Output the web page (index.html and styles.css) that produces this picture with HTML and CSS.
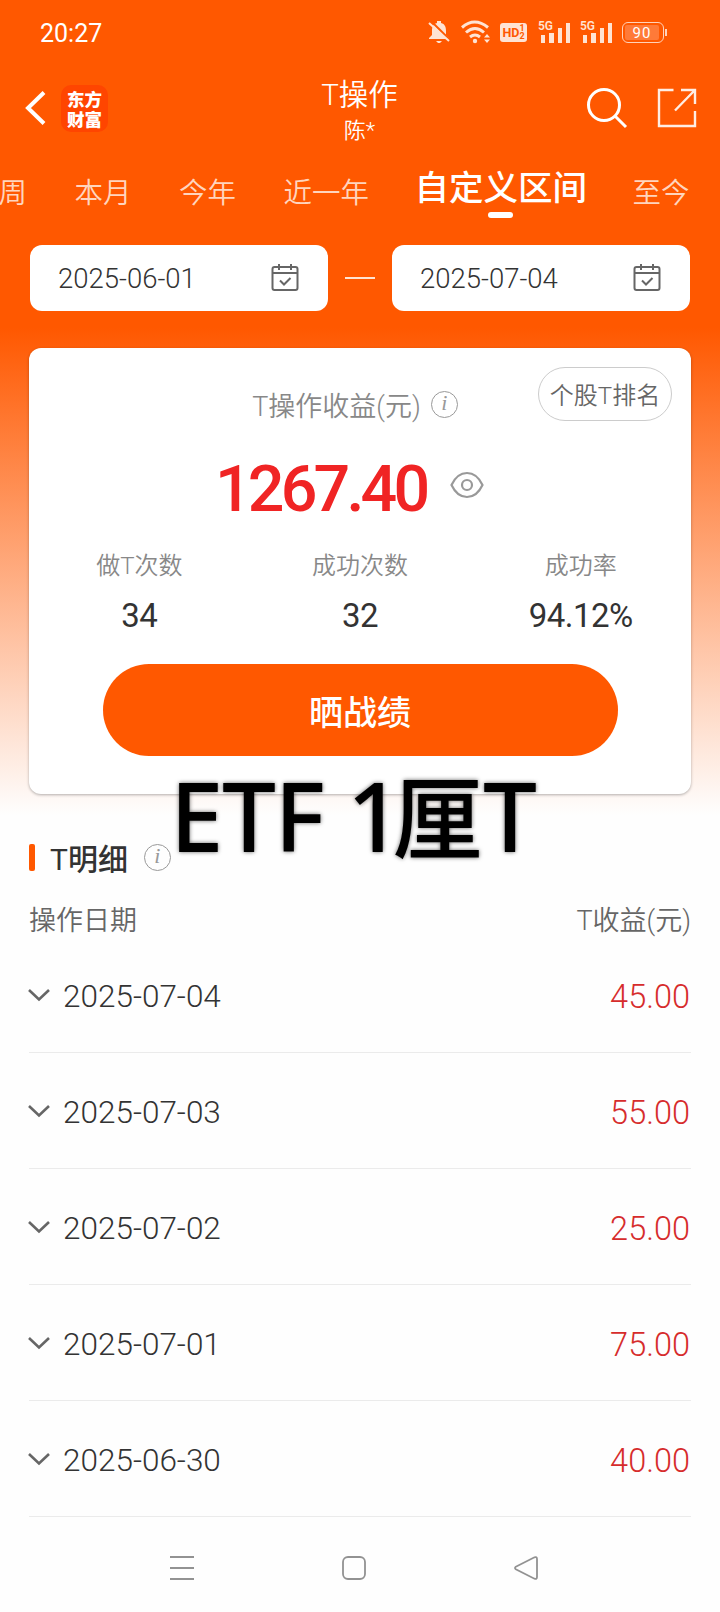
FILE: index.html
```
<!DOCTYPE html>
<html lang="zh-CN">
<head>
    <meta charset="UTF-8">
    <meta name="viewport" content="width=device-width, initial-scale=1.0">
    <title>T操作</title>
    <link rel="stylesheet" href="styles.css">
</head>
<body>
    <div class="page">
        <!-- 状态栏 -->
        <div class="status">
            <span class="time">20:27</span>
            <div class="status-icons">
                <svg class="bell" width="22" height="24" viewBox="0 0 22 24">
                    <path fill="#ffe3d3" d="M9 3V1h4v2c4 1 5 4 5 8v4l3 3v1H1v-1l3-3v-4c0-4 1-7 5-8zM8 21h6l-2 2h-2z"/>
                    <path stroke="#ff5800" stroke-width="2" d="M3 1l19 19"/>
                    <path stroke="#ffe3d3" stroke-width="2" d="M1 3l20 18"/>
                </svg>
                <svg class="wifi" width="30" height="24" viewBox="0 0 30 24">
                    <g fill="none" stroke="#ffe3d3" stroke-width="3">
                        <path d="M1 7.500q12.500-11 26 0M5 12.500q9-8 18 0M9 17q5-4 10 0"/>
                    </g>
                    <circle cx="14" cy="21" r="2.2" fill="#ffe3d3"/>
                    <path fill="#ffe3d3" d="M23 17.500l3-3.500 3 3.500zM23 19.500l3 3.500 3-3.500z"/>
                </svg>
                <span class="hd">HD<small>1<br>2</small></span>
                <span class="signal"><b>5G</b><i></i><i></i><i></i><i></i></span>
                <span class="signal"><b>5G</b><i></i><i></i><i></i><i></i></span>
                <span class="battery"><span>90</span></span>
            </div>
        </div>

        <!-- 标题栏 -->
        <header class="header">
            <div class="header-left">
                <svg width="22" height="36" viewBox="0 0 22 36">
                    <path d="M19 2.500L3 18l16 15.500" fill="none" stroke="#fff" stroke-width="4"/>
                </svg>
                <div class="logo">东方<br>财富</div>
            </div>
            <div class="title">
                <h1>T操作</h1>
                <p>陈*</p>
            </div>
            <div class="header-right">
                <svg width="42" height="42" viewBox="0 0 42 42" fill="none" stroke="#fff" stroke-width="3">
                    <circle cx="18" cy="18" r="15.500"/>
                    <path d="M29 29l11 11"/>
                </svg>
                <svg width="40" height="40" viewBox="0 0 40 40" fill="none" stroke="#ffede3" stroke-width="2.400">
                    <path d="M16.500 2H2v36h36V23M24 2h14v14M37.500 2.500L18 22.500"/>
                </svg>
            </div>
        </header>

        <!-- 时间范围 -->
        <nav class="tabs">
            <span>本周</span>
            <span>本月</span>
            <span>今年</span>
            <span>近一年</span>
            <span class="active">自定义区间</span>
            <span>至今</span>
        </nav>

        <div class="dates">
            <div class="date-box">
                <span>2025-06-01</span>
                <svg width="28" height="28" viewBox="0 0 28 28" fill="none" stroke="#666" stroke-width="2">
                    <rect x="1.500" y="3" width="25" height="23" rx="2"/>
                    <path d="M1.500 9h25M8 0v6M20 0v6M9 16.500l4 4 6.500-6.500"/>
                </svg>
            </div>
            <i class="dash"></i>
            <div class="date-box">
                <span>2025-07-04</span>
                <svg width="28" height="28" viewBox="0 0 28 28" fill="none" stroke="#666" stroke-width="2">
                    <rect x="1.500" y="3" width="25" height="23" rx="2"/>
                    <path d="M1.500 9h25M8 0v6M20 0v6M9 16.500l4 4 6.500-6.500"/>
                </svg>
            </div>
        </div>

        <!-- 收益卡片 -->
        <section class="card">
            <a class="rank">个股T排名</a>
            <div class="label">T操作收益(元)<span class="tip">i</span></div>
            <div class="amount">
                <span>1267.40</span>
                <svg width="34" height="28" viewBox="0 0 34 28" fill="none" stroke="#999" stroke-width="2.200">
                    <path d="M1.500 14C9-2 25-2 32.500 14 25 30 9 30 1.500 14z"/>
                    <circle cx="17" cy="14" r="5"/>
                </svg>
            </div>
            <div class="stats">
                <div><p>做T次数</p><strong>34</strong></div>
                <div><p>成功次数</p><strong>32</strong></div>
                <div><p>成功率</p><strong>94.12%</strong></div>
            </div>
            <button class="share">晒战绩</button>
            <div class="caption">ETF 1<span>厘</span>T</div>
        </section>

        <!-- 明细 -->
        <section class="detail">
            <h2>T明细<span class="tip">i</span></h2>
            <div class="list-head"><span>操作日期</span><span>T收益(元)</span></div>
            <ul>
                <li><svg class="arrow" viewBox="0 0 22 14"><path d="M1 2l10 9.500L21 2"/></svg><span>2025-07-04</span><em>45.00</em></li>
                <li><svg class="arrow" viewBox="0 0 22 14"><path d="M1 2l10 9.500L21 2"/></svg><span>2025-07-03</span><em>55.00</em></li>
                <li><svg class="arrow" viewBox="0 0 22 14"><path d="M1 2l10 9.500L21 2"/></svg><span>2025-07-02</span><em>25.00</em></li>
                <li><svg class="arrow" viewBox="0 0 22 14"><path d="M1 2l10 9.500L21 2"/></svg><span>2025-07-01</span><em>75.00</em></li>
                <li><svg class="arrow" viewBox="0 0 22 14"><path d="M1 2l10 9.500L21 2"/></svg><span>2025-06-30</span><em>40.00</em></li>
            </ul>
        </section>

        <!-- 系统导航 -->
        <footer class="sysnav">
            <svg width="24" height="24" viewBox="0 0 24 24"><path d="M0 1h24M0 12h24M0 23h24"/></svg>
            <svg width="24" height="24" viewBox="0 0 24 24"><rect x="1" y="1" width="22" height="22" rx="5"/></svg>
            <svg width="24" height="24" viewBox="0 0 24 24"><path d="M1.800 10.800L20.500 1.300q2.500-.8 2.500 1.700v18q0 2.500-2.500 1.700L1.800 13.200q-1.600-1.200 0-2.400z"/></svg>
        </footer>
    </div>
</body>
</html>
```
FILE: styles.css
```
* {
    box-sizing: border-box;
}
body {
    margin: 0;
    font-family: Roboto, "Noto Sans CJK SC", sans-serif;
    font-weight: 350;
    color: #333;
    background: #fefefe;
}
h1, h2, p, ul {
    margin: 0;
    padding: 0;
    font-weight: inherit;
}
svg {
    display: block;
    flex: none;
}
.page {
    width: 720px;
    height: 1612px;
    overflow: hidden;
    background: linear-gradient(#ff5800 328px, #fefefe 815px);
}

/* 状态栏 */
.status {
    height: 64px;
    padding: 0 56px 0 40px;
    display: flex;
    justify-content: space-between;
    align-items: center;
    color: #fff;
}
.time {
    padding-top: 2px;
    font-size: 25px;
    font-weight: 450;
}
.status-icons {
    display: flex;
    align-items: center;
    color: #ffe3d3;
}
.wifi {
    margin-left: 11px;
}
.hd {
    display: flex;
    align-items: center;
    justify-content: center;
    width: 27px;
    height: 19px;
    margin-left: 9px;
    border-radius: 3px;
    background: #ffe3d3;
    color: #ff5800;
    font-size: 12.5px;
    font-weight: 700;
}
.hd small {
    font-size: 9px;
    line-height: 8px;
}
.signal {
    position: relative;
    display: flex;
    align-items: flex-end;
    gap: 4px;
    width: 31px;
    height: 22px;
    margin-left: 12px;
    padding-left: 2px;
}
.signal + .signal {
    margin-left: 11px;
}
.signal b {
    position: absolute;
    left: -1px;
    top: -1px;
    font-size: 12px;
    line-height: 12px;
    font-weight: 600;
}
.signal i {
    width: 5px;
    height: 8px;
    background: #ffe3d3;
}
.signal i:nth-of-type(2) {
    height: 10px;
}
.signal i:nth-of-type(3) {
    height: 15px;
}
.signal i:nth-of-type(4) {
    height: 20px;
}
.battery {
    position: relative;
    width: 42px;
    height: 21px;
    margin-left: 10px;
    padding: 2px;
    border: 1.5px solid #ffd2ba;
    border-radius: 6px;
}
.battery span {
    display: block;
    width: 34px;
    height: 15px;
    border-radius: 2px;
    background: #ff7a38;
    color: #fff;
    font-size: 15px;
    line-height: 16px;
    font-weight: 400;
    letter-spacing: 1px;
    text-align: center;
}
.battery::after {
    content: "";
    position: absolute;
    right: -4px;
    top: 6px;
    width: 2px;
    height: 7px;
    background: #ffd2ba;
}

/* 标题栏 */
.header {
    height: 90px;
    padding: 0 23px 0 25px;
    display: grid;
    grid-template-columns: 1fr auto 1fr;
    align-items: center;
    color: #fff;
}
.header-left,
.header-right {
    display: flex;
    align-items: center;
    margin-top: -2px;
}
.header-left {
    gap: 14px;
}
.header-right {
    justify-content: flex-end;
    gap: 29px;
}
.logo {
    width: 47px;
    height: 47px;
    padding-top: 4px;
    border-radius: 10px;
    background: #ff4500;
    font-family: "Noto Sans CJK SC", sans-serif;
    font-size: 17.5px;
    line-height: 20px;
    font-weight: 900;
    text-align: center;
}
.title {
    margin: 6px 3px 0 0;
    text-align: center;
}
.title h1 {
    font-size: 29.5px;
    line-height: 37px;
}
.title p {
    font-size: 22px;
    line-height: 33px;
}

/* 时间范围 */
.tabs {
    height: 72px;
    margin-left: -30px;
    display: flex;
    align-items: center;
    gap: 47.5px;
    white-space: nowrap;
    font-size: 28.5px;
    color: #ffd5be;
}
.tabs .active {
    position: relative;
    margin: -10px -2px 0;
    font-size: 34.5px;
    font-weight: 500;
    color: #fff;
}
.tabs .active::after {
    content: "";
    position: absolute;
    left: 50%;
    bottom: -8px;
    width: 25px;
    height: 6px;
    margin-left: -13px;
    border-radius: 3px;
    background: #fff;
}
.dates {
    display: flex;
    align-items: center;
    justify-content: space-between;
    margin: 19px 30px 0;
}
.date-box {
    width: 298px;
    height: 66px;
    padding: 0 29px 0 28px;
    display: flex;
    align-items: center;
    justify-content: space-between;
    border-radius: 12px;
    background: #fff;
    font-size: 27.5px;
}
.dash {
    width: 30px;
    height: 2px;
    background: #ffe3d3;
}

/* 收益卡片 */
.card {
    position: relative;
    height: 446px;
    margin: 37px 29px 0;
    padding-top: 35px;
    border-radius: 12px;
    background: #fff;
    box-shadow: 0 1px 3px rgba(0, 0, 0, 0.3);
}
.rank {
    position: absolute;
    top: 19px;
    right: 19px;
    width: 134px;
    height: 54px;
    border: 1px solid #ccc;
    border-radius: 27px;
    font-size: 24px;
    line-height: 56px;
    text-align: center;
    color: #666;
}
.label {
    display: flex;
    align-items: center;
    justify-content: center;
    height: 42px;
    padding-right: 10px;
    font-size: 27px;
    color: #888;
}
.tip {
    width: 27px;
    height: 27px;
    margin-left: 10px;
    border: 1.5px solid #999;
    border-radius: 50%;
    font: italic 400 22px/22px "Liberation Serif", serif;
    text-align: center;
    color: #999;
}
.amount {
    display: flex;
    align-items: center;
    height: 80px;
    margin: 24px 0 0 186px;
    font-size: 64.5px;
    font-weight: 500;
    letter-spacing: -3.8px;
    color: #f02424;
}
.amount svg {
    margin: -8px 0 0 24px;
}
.stats {
    display: grid;
    grid-template-columns: repeat(3, 1fr);
    margin-top: 17px;
    text-align: center;
}
.stats p {
    font-size: 24px;
    line-height: 41px;
    color: #888;
}
.stats strong {
    display: block;
    font-size: 33px;
    line-height: 57px;
    font-weight: 400;
    letter-spacing: -0.5px;
}
.share {
    display: block;
    width: 515px;
    height: 92px;
    margin: 20px auto 0;
    border: none;
    border-radius: 46px;
    background: #ff5800;
    color: #fff;
    font: 500 34px Roboto, "Noto Sans CJK SC", sans-serif;
}
/* 压在卡片下沿的文字 */
.caption {
    position: absolute;
    left: 141px;
    top: 412px;
    font-family: "Noto Sans", "Noto Sans CJK SC", sans-serif;
    font-size: 96px;
    line-height: 110px;
    font-weight: 500;
    letter-spacing: -1.5px;
    white-space: nowrap;
    color: #000;
    text-shadow: 0 0 4px rgba(0, 0, 0, 0.6);
}
.caption span {
    margin: 0 2px 0 -8px;
    font-size: 90px;
}

/* 明细 */
.detail {
    padding: 41px 29px 0;
}
.detail h2 {
    display: flex;
    align-items: center;
    height: 44px;
    font-size: 30px;
    font-weight: 450;
}
.detail h2::before {
    content: "";
    width: 6px;
    height: 27px;
    margin-right: 15px;
    border-radius: 2px;
    background: #ff5800;
}
.detail h2 .tip {
    margin-left: 16px;
}
.list-head {
    display: flex;
    justify-content: space-between;
    height: 77px;
    padding-top: 22px;
    font-size: 27px;
    line-height: 40px;
    color: #666;
}
ul {
    list-style: none;
}
li {
    display: flex;
    align-items: center;
    height: 116px;
    padding-top: 4px;
    border-bottom: 1px solid #ebebeb;
    font-size: 31.5px;
}
li:first-child {
    height: 97px;
    padding: 0 0 15px;
}
.arrow {
    width: 22px;
    height: 14px;
    margin: -3px 13px 0 -1px;
    fill: none;
    stroke: #666;
    stroke-width: 2.6;
}
li em {
    margin-right: 1px;
    margin-left: auto;
    font-size: 32.5px;
    font-style: normal;
    color: #d62c2c;
}

/* 系统导航 */
.sysnav {
    display: flex;
    gap: 148px;
    padding: 39px 0 0 170px;
}
.sysnav svg {
    fill: none;
    stroke: #929292;
    stroke-width: 1.8;
}
```
